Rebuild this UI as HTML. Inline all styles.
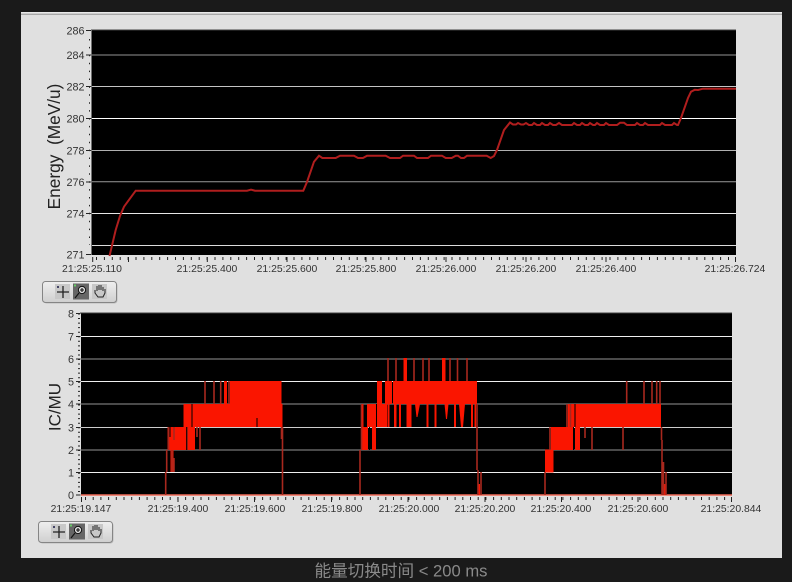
<!DOCTYPE html>
<html><head><meta charset="utf-8"><style>
html,body{margin:0;padding:0;width:792px;height:582px;overflow:hidden;background:#1a1a1a}
svg{display:block}
text{font-family:"Liberation Sans","Noto Sans CJK SC",sans-serif;fill:#333}
.x{font-size:10.4px;text-anchor:middle}
.y{font-size:10.8px;text-anchor:end}
</style></head><body>
<svg width="792" height="582" viewBox="0 0 792 582" xmlns="http://www.w3.org/2000/svg">
<defs>
<linearGradient id="b" x1="0" y1="0" x2="0" y2="1"><stop offset="0" stop-color="#efefef"/><stop offset="1" stop-color="#cfcfcf"/></linearGradient>
<g id="tb">
<rect x="1.500" y="1.500" width="74" height="21" rx="3" fill="#bdbdbd"/>
<rect x="0.500" y="0.500" width="74" height="21" rx="3" fill="url(#b)" stroke="#858585"/>
<rect x="13" y="3" width="15" height="15" fill="#c8c8c8"/>
<path d="M15 11h12M21 5v12" stroke="#222" stroke-width="1.300" fill="none"/>
<rect x="15" y="5" width="2" height="2" fill="#446"/>
<rect x="31" y="2.500" width="16" height="16" fill="#666"/>
<circle cx="40" cy="9" r="3.600" fill="#ddd" stroke="#111"/>
<path d="M37 12l-4 5M38 9h4M40 7v4" stroke="#111" stroke-width="1.100" fill="none"/>
<rect x="32" y="3.500" width="2" height="2" fill="#6c6"/>
<rect x="50" y="3" width="15" height="15" fill="#c8c8c8"/>
<path d="M53 9v3l3 4h5l2-4V8M55 10V5M57 9V4M59 9V4M61 10V6" stroke="#222" stroke-width="1" fill="none"/>
</g>
</defs>
<rect width="792" height="582" fill="#1a1a1a"/>
<rect x="21" y="12" width="761" height="546" fill="#e0e0e0"/>
<rect x="21" y="12.500" width="761" height="1" fill="#f2f2f2"/>
<rect x="21" y="13.500" width="761" height="1.500" fill="#a8a8a8"/>

<!-- TOP CHART -->
<rect x="91.500" y="30" width="644.500" height="225" fill="#000"/>
<path d="M91 29.700H736" stroke="#777" stroke-width="1"/>
<g fill="none" stroke-width="1">
<path d="M92 55H736" stroke="#777" stroke-width="1.300"/>
<path d="M92 86.500H736" stroke="#c4c4c4"/>
<path d="M92 118.500H736" stroke="#fff"/>
<path d="M92 150.500H736" stroke="#b0b0b0"/>
<path d="M92 181.700H736" stroke="#999"/>
<path d="M92 213.500H736" stroke="#e6e6e6"/>
<path d="M92 245.500H736" stroke="#dcdcdc"/>
</g>
<path d="M109.500 256L115.700 230L120 216L124 206.700L135.700 190.700H247L251 189.700L255 190.700H303.300L307 182L314 161.700L319 155.700L322.300 158H335.700L340 155.700H354L358 158H363L367 155.700H385.700L390 158H400L403 155.700H414L417 158H428L431 155.700H442L445.700 158H451.700L455.700 155.700H458L461 158H464L467 155.700H486.700L490.700 158L494 156L497 150L504 130L510 122.500L513 124.500H516L518 123L521 124.500L523.500 124.500L526 123L529 125H532L534 123L537 125H540L542 123L545 125H548L550 123L553 125H556L559 123L562 125H572L574 123L577 125H580L582 123L585 125H588L590 123L593 125H595L597 123L600 125H604L606 123L609 125H617L620 122.800L624 122.800L627 125H635L637 123L640 125H643L645 123L648 125H660L662 123L665 125H672L674 123L677 125H678L681 118L688 98L691 91.700L694.700 89.800L698 90L703 88.700H736" fill="none" stroke="#b01e1e" stroke-width="2"/>

<!-- top y ticks -->
<g stroke="#222" fill="none">
<path d="M86 30.500h5M86 55h5M86 86.500h5M86 118.500h5M86 150.500h5M86 182h5M86 213.500h5M86 254.500h5"/>
<path d="M89.500 39V245" stroke-width="1" stroke-dasharray="1.500 6.400"/>
<path d="M92.700 257V262M128.500 257V262M207.300 257V262M287 257V262M366 257V262M446 257V262M526 257V262M606 257V262M735.500 257V262"/>
<path d="M96 258.500H736" stroke-width="3" stroke-dasharray="1 6.900"/>
</g>
<text class="y" x="84.500" y="34.500">286</text>
<text class="y" x="84.500" y="59">284</text>
<text class="y" x="84.500" y="90.500">282</text>
<text class="y" x="84.500" y="122.500">280</text>
<text class="y" x="84.500" y="154.500">278</text>
<text class="y" x="84.500" y="186">276</text>
<text class="y" x="84.500" y="217.500">274</text>
<text class="y" x="84.500" y="258.500">271</text>
<text class="x" x="92" y="272">21:25:25.110</text>
<text class="x" x="207" y="272">21:25:25.400</text>
<text class="x" x="287" y="272">21:25:25.600</text>
<text class="x" x="366" y="272">21:25:25.800</text>
<text class="x" x="446" y="272">21:25:26.000</text>
<text class="x" x="526" y="272">21:25:26.200</text>
<text class="x" x="606" y="272">21:25:26.400</text>
<text class="x" x="735" y="272">21:25:26.724</text>
<text transform="translate(60,146.500) rotate(-90)" text-anchor="middle" font-size="17.300" style="fill:#222;white-space:pre">Energy  (MeV/u)</text>
<use href="#tb" x="42" y="281"/>

<!-- BOTTOM CHART -->
<rect x="81" y="313" width="651" height="182" fill="#000"/>
<path d="M80 312.700H732" stroke="#777"/>
<g fill="none" stroke-width="1">
<path d="M81 336.500H732" stroke="#eee"/>
<path d="M81 359H732" stroke="#777" stroke-width="1.300"/>
<path d="M81 381.500H732" stroke="#eee"/>
<path d="M81 404H732" stroke="#777" stroke-width="1.300"/>
<path d="M81 427.500H732" stroke="#ccc"/>
<path d="M81 450H732" stroke="#777" stroke-width="1.300"/>
<path d="M81 472.500H732" stroke="#eee"/>
</g>
<path d="M81 495H732" stroke="#f06a58" stroke-width="1.500"/>

<g fill="#fa1500">
<!-- burst 1 -->
<rect x="167.500" y="427" width="27.500" height="23"/>
<rect x="183.500" y="404" width="47" height="23"/>
<rect x="230" y="381" width="51.500" height="46"/>
<rect x="230" y="404" width="52.500" height="23"/>
<rect x="170.500" y="450" width="3" height="22"/>
<rect x="224" y="381" width="3" height="23"/>
<!-- burst 2 -->
<rect x="362" y="427" width="6" height="23"/>
<rect x="372" y="427" width="4" height="23"/>
<rect x="367" y="404" width="20" height="23"/>
<rect x="361" y="404" width="2.500" height="23"/>
<rect x="377" y="381" width="5" height="23"/>
<rect x="385" y="381" width="7" height="23"/>
<rect x="393" y="381" width="84" height="23"/>
<rect x="387.500" y="404" width="2" height="23"/>
<rect x="394" y="404" width="2.500" height="23"/>
<rect x="399" y="404" width="2" height="23"/>
<rect x="406.500" y="404" width="5" height="23"/>
<path d="M415 404h5l-2.500 13h-1z"/>
<rect x="426.500" y="404" width="2" height="23"/>
<rect x="434.500" y="404" width="2" height="23"/>
<path d="M444.500 404h4l-1.500 15h-1z"/>
<rect x="454" y="404" width="2" height="23"/>
<path d="M459 404h6l-2 23h-2z"/>
<rect x="471" y="404" width="2" height="23"/>
<rect x="474.500" y="404" width="1.500" height="23"/>
<rect x="403.500" y="358" width="3.500" height="23"/>
<rect x="442" y="358" width="3.500" height="23"/>
<rect x="477.500" y="484" width="2.500" height="11"/>
<!-- burst 3 -->
<rect x="545" y="449.500" width="8.500" height="23"/>
<rect x="551" y="427" width="22" height="23"/>
<rect x="575" y="427" width="5" height="23"/>
<rect x="568" y="404" width="93" height="23"/>
<rect x="663.500" y="484" width="2" height="11"/>
</g>
<g fill="none" stroke="#a8281e" stroke-width="1.600">
<path d="M165.700 495V472M166.700 472V450M168.500 450V427M174 427V440M187 427V450M197 427V437M200 427V450M172 472V450M174 472V458"/>
<path d="M205 381V404M214 381V404M220.700 381V404M229 381V404M282.500 427V495M281.500 427V439"/>
<path d="M360 495V450M361.500 450V404M388 358V381M396 358V381M414 358V381M423 358V381M429 358V381M450 358V381M457.500 358V381M467 358V381"/>
<path d="M477 404V470M478 470V495M481 472V495"/>
<path d="M545 472V495M550 427V450M567 404V427M570.500 404V427M626.700 381V404M644 381V404M652 381V404M656.700 381V404M660 381V404M585 427V438M592 427V450M623 427V450M661.500 427V440M662 440V495M663.500 462V495M666 472V495"/>
</g>
<g stroke="#000" stroke-width="1" fill="none">
<path d="M170 427V437M186.700 427V450M192 404V427M257 418V427"/>
<path d="M369.500 427V450M376.500 404V427"/>
<path d="M573.500 427V450M575 404V427"/>
</g>

<!-- bottom y ticks -->
<g stroke="#222" fill="none">
<path d="M76 313.500h4.500M76 336.500h4.500M76 359h4.500M76 381.500h4.500M76 404h4.500M76 427.500h4.500M76 450h4.500M76 472.500h4.500M76 495h4.500"/>
<path d="M79 313.500V495" stroke-width="2" stroke-dasharray="1 3.550"/>
<path d="M81.500 497V502M178 497V502M254.500 497V502M331.500 497V502M408 497V502M485 497V502M561.500 497V502M638 497V502M731.500 497V502"/>
<path d="M85 498.500H732" stroke-width="3" stroke-dasharray="1 6.700"/>
</g>
<text class="y" x="74" y="317.500">8</text>
<text class="y" x="74" y="340.500">7</text>
<text class="y" x="74" y="363">6</text>
<text class="y" x="74" y="385.500">5</text>
<text class="y" x="74" y="408">4</text>
<text class="y" x="74" y="431.500">3</text>
<text class="y" x="74" y="454">2</text>
<text class="y" x="74" y="476.500">1</text>
<text class="y" x="74" y="499">0</text>
<text class="x" x="81" y="512">21:25:19.147</text>
<text class="x" x="178" y="512">21:25:19.400</text>
<text class="x" x="255" y="512">21:25:19.600</text>
<text class="x" x="332" y="512">21:25:19.800</text>
<text class="x" x="409" y="512">21:25:20.000</text>
<text class="x" x="485" y="512">21:25:20.200</text>
<text class="x" x="561" y="512">21:25:20.400</text>
<text class="x" x="638" y="512">21:25:20.600</text>
<text class="x" x="731" y="512">21:25:20.844</text>
<text transform="translate(60.500,407) rotate(-90)" text-anchor="middle" font-size="17" style="fill:#222">IC/MU</text>
<use href="#tb" x="38" y="521"/>

<text x="401" y="576.500" text-anchor="middle" font-size="16.600" style="fill:#8a8a8a">能量切换时间 &lt; 200 ms</text>
</svg>
</body></html>
